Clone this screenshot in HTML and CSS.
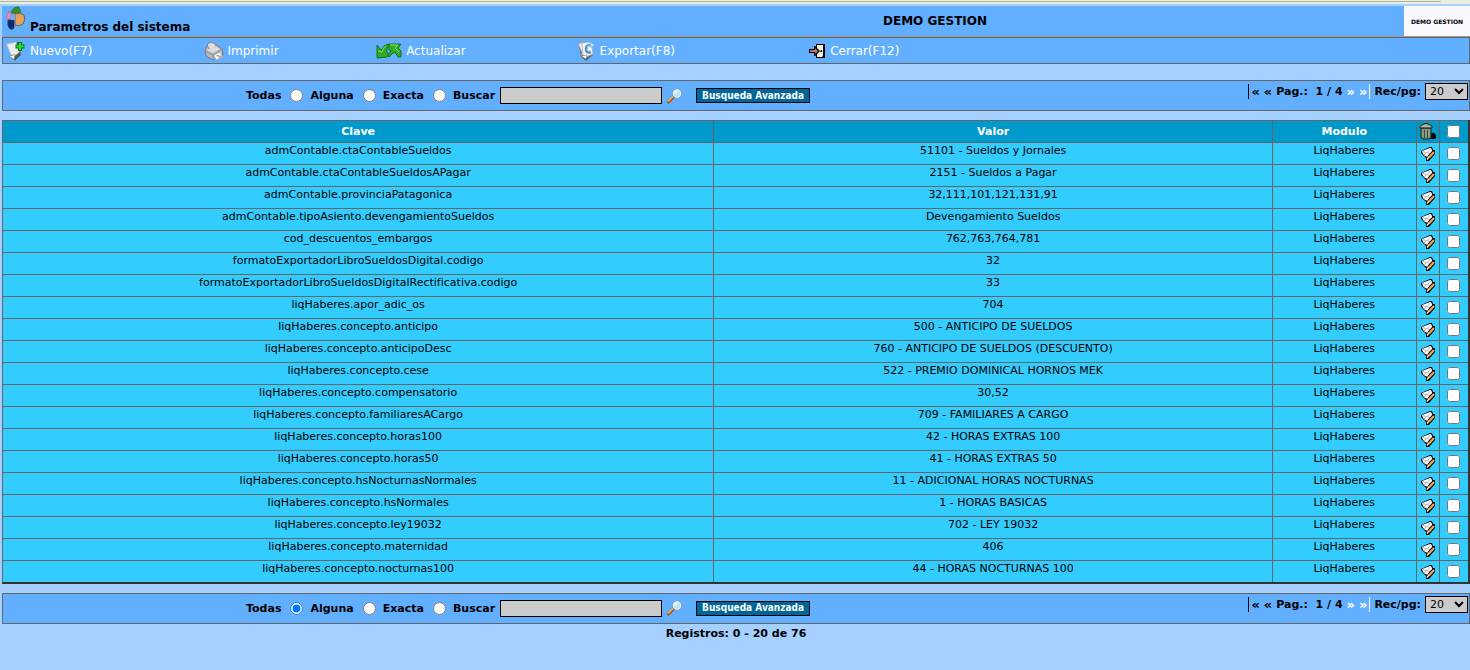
FILE: index.html
```html
<!DOCTYPE html>
<html lang="es">

<head>
    <meta charset="UTF-8">
    <meta name="viewport" content="width=device-width, initial-scale=1.0">
    <title>Parametros del sistema</title>
    <link rel="stylesheet" href="styles.css">
</head>

<body>
    <!-- Iconos reutilizados -->
    <svg class="sprites" aria-hidden="true">
        <symbol id="ico-editar" viewBox="0 0 14 14">
            <path d="M0 4 9 0h2l1 3h2v4l-6 7H5v-3L3 9 0 6z" fill="#000"/>
            <path d="M1 4 9 1h1l2 4-5 5-3-1-2-2z" fill="#fff"/>
            <path d="M2 4.500 6 6 9.500 2M3 8 5 6M7 6l3 1" stroke="#999" stroke-width="0.700" fill="none"/>
            <path d="M13 4.500 7.500 10.500" stroke="#000" stroke-width="3.500"/>
            <path d="M13 5 8 10.500" stroke="#f3a65a" stroke-width="2.200"/>
            <path d="M8 10 6 12.500" stroke="#fff0c0" stroke-width="1.500"/>
        </symbol>
        <symbol id="ico-lupa" viewBox="0 0 16 16">
            <path d="M1.500 14 6.500 9" stroke="#a85510" stroke-width="3" stroke-linecap="round"/>
            <path d="M1.500 13 6 8.500" stroke="#ffb347" stroke-width="1.500" stroke-linecap="round"/>
            <circle cx="10" cy="5.500" r="4.700" fill="#b5e4ff" stroke="#7e98b5" stroke-width="1.200"/>
            <circle cx="10" cy="5.500" r="3.800" fill="none" stroke="#e8f4fc" stroke-width="1"/>
            <path d="M8 5.500Q8 3.500 10.500 3.500" stroke="#fff" stroke-width="1.500" fill="none"/>
        </symbol>
    </svg>

    <div class="linea-superior"></div>

    <header class="cabecera">
        <svg class="logo" viewBox="0 0 20 25" aria-hidden="true">
            <path d="M5 6Q8 0 13 1l2 5q-4 3-10 1z" fill="#36902c" stroke="#40614b" stroke-width="0.600"/>
            <path d="M3 5q3 1 2 5l-2 4Q0 15 1 10z" fill="#f287b4" stroke="#9a6f91" stroke-width="0.600"/>
            <path d="M9 8q5-2 9 1 2 5-1 9-4 3-8 1z" fill="#e0a35c" stroke="#705d57" stroke-width="1"/>
            <path d="M2 14h6v8q-2 3-5 0-2-3-1-8z" fill="#122973" stroke="#27437d" stroke-width="0.600"/>
            <path d="M6 8h3v6H5z" fill="#74adf0"/>
        </svg>
        <h1 class="titulo">Parametros del sistema</h1>
        <div class="empresa">DEMO GESTION</div>
        <div class="marca">DEMO GESTION</div>
    </header>

    <nav class="menu">
        <a href="#">
            <svg width="20" height="20" viewBox="0 0 20 20" aria-hidden="true">
                <path d="M2 3 12 1 15 14 9 19.500 5 17 8 14z" fill="#4c545c"/>
                <path d="M0.500 3 10 1 13.500 11 8 15.500 5 14z" fill="#ececec" stroke="#b5b9bd" stroke-width="0.700"/>
                <path d="M3 15.500 8 18.500 9 13.500z" fill="#fff" stroke="#777" stroke-width="0.700"/>
                <path d="M14 1v9M9.500 5.500h9" stroke="#08751c" stroke-width="4"/>
                <path d="M14 2v7M10.500 5.500h7" stroke="#25e52d" stroke-width="2"/>
            </svg>
            Nuevo(F7)
        </a>
        <a href="#">
            <svg width="20" height="20" viewBox="0 0 20 20" aria-hidden="true">
                <path d="M1 10 3 5 11 3 18 8 19 14 9 19 2 15z" fill="#b9bcbb" stroke="#666b6c" stroke-width="0.800"/>
                <path d="M4 6 3 3 8 1 12 4 11 7 6 9z" fill="#ddd" stroke="#777" stroke-width="0.800"/>
                <path d="M1 10 9 14 18 8M9 14v4" stroke="#8b8f90" fill="none"/>
                <path d="M3 9 9 12 16 8 11 5z" fill="#dcdedb"/>
                <path d="M10 14 16 11 19 16 12 19z" fill="#fff" stroke="#999" stroke-width="0.600"/>
                <path d="M12 15 14 13.500 16 16z" fill="#37a9eb"/>
                <path d="M14 17 17 14 18 16z" fill="#ef7651"/>
            </svg>
            Imprimir
        </a>
        <a href="#">
            <svg width="26" height="16" viewBox="0 0 26 16" aria-hidden="true">
                <path d="M1 2 4 6 6 7Q7 2 12 1.500h2Q10 4 11 10l2 1-2 3-10 1V6z" fill="#2fae24" stroke="#17701a"/>
                <path d="M13 1h12l-3 4 3 3v6h-3l-3-5-2 1-4 4-1-2 3-4-2-1z" fill="#2fae24" stroke="#17701a"/>
                <path d="M2 8 6 9Q7 4 10 3M14 2h8l-3 3 4 4" stroke="#8be05c" fill="none"/>
            </svg>
            Actualizar
        </a>
        <a href="#">
            <svg width="19" height="20" viewBox="0 0 19 20" aria-hidden="true">
                <path d="M2 4 13 2 16 14 9 20 4 16z" fill="#606975"/>
                <path d="M1 3 6 1 8 12 3 15 5 12z" fill="#e5e5e5" stroke="#888" stroke-width="0.600"/>
                <path d="M5 2 14 1 16 13 9 16 6 14z" fill="#f8f8f8" stroke="#aaa" stroke-width="0.600"/>
                <path d="M4 15 9 18 10 14z" fill="#fff" stroke="#777" stroke-width="0.600"/>
                <path d="M14 11Q9 13 9 8 9 4 14 4" stroke="#4f8fc8" stroke-width="2.500" fill="none"/>
                <path d="M13 10Q10 11 10 8 10 4 14 4" stroke="#8bcbfb" fill="none"/>
                <path d="M13 1 18 4 14 7z" fill="#bce1ff" stroke="#68a4d7" stroke-width="0.600"/>
            </svg>
            Exportar(F8)
        </a>
        <a href="#">
            <svg width="17" height="16" viewBox="0 0 17 16" aria-hidden="true">
                <path d="M7 1h9v14H7z" fill="#000"/>
                <path d="M8 2h6v11l-1 1H8z" fill="#f1efdf"/>
                <path d="M0 6h5V3h1l5 5-5 5H5v-3H0z" fill="#000"/>
                <path d="M1 7h5V5l3 3-3 3V9H1z" fill="#c77070"/>
                <path d="M12 7h1v2h-2z" fill="#000"/>
            </svg>
            Cerrar(F12)
        </a>
    </nav>

    <form class="barra">
        <div class="busqueda">
            <label>Todas <input type="radio" name="modo"></label>
            <label>Alguna <input type="radio" name="modo"></label>
            <label>Exacta <input type="radio" name="modo"></label>
            <label class="buscar">Buscar <input type="text" name="buscar"></label>
            <button type="button" class="lupa" aria-label="Buscar"><svg width="16" height="16"><use href="#ico-lupa"/></svg></button>
            <button type="button" class="avanzada">Busqueda Avanzada</button>
        </div>
        <div class="paginador">
            <span class="flecha primera">«</span>
            <span class="flecha">«</span>
            <span class="pagina">Pag.:&nbsp; 1 / 4</span>
            <a href="#" class="flecha">»</a>
            <a href="#" class="flecha ultima">»</a>
            <label>Rec/pg: <select><option>20</option><option>50</option></select></label>
        </div>
    </form>

    <table class="listado">
        <colgroup>
            <col class="col-clave">
            <col class="col-valor">
            <col>
            <col class="col-editar">
            <col class="col-marcar">
        </colgroup>
        <thead>
            <tr>
                <th>Clave</th>
                <th>Valor</th>
                <th>Modulo</th>
                <th>
                    <svg width="17" height="17" viewBox="0 0 17 17" aria-hidden="true">
                        <path d="M11 10h4l2 2v3l-2 1H6z" fill="#000"/>
                        <path d="M2 5h10v10l-2 1H4l-2-1z" fill="#71866f" stroke="#1a261c"/>
                        <path d="M5.500 7v8M8.500 7v8" stroke="#3c503e"/>
                        <path d="M4 6v8M7 6v9M10 6v8" stroke="#9fb29c"/>
                        <path d="M1 3.500Q1 2 5 1.500V0.500h4v1q4 0.500 4 2V5H1z" fill="#8da08a" stroke="#1a261c"/>
                        <path d="M3 3h8" stroke="#c5d2bd"/>
                    </svg>
                </th>
                <th><input type="checkbox" aria-label="Marcar todos"></th>
            </tr>
        </thead>
        <tbody>
            <tr><td>admContable.ctaContableSueldos</td><td>51101 - Sueldos y Jornales</td><td>LiqHaberes</td><td><a href="#" aria-label="Editar"><svg width="14" height="14"><use href="#ico-editar"/></svg></a></td><td><input type="checkbox" aria-label="Marcar"></td></tr>
            <tr><td>admContable.ctaContableSueldosAPagar</td><td>2151 - Sueldos a Pagar</td><td>LiqHaberes</td><td><a href="#" aria-label="Editar"><svg width="14" height="14"><use href="#ico-editar"/></svg></a></td><td><input type="checkbox" aria-label="Marcar"></td></tr>
            <tr><td>admContable.provinciaPatagonica</td><td>32,111,101,121,131,91</td><td>LiqHaberes</td><td><a href="#" aria-label="Editar"><svg width="14" height="14"><use href="#ico-editar"/></svg></a></td><td><input type="checkbox" aria-label="Marcar"></td></tr>
            <tr><td>admContable.tipoAsiento.devengamientoSueldos</td><td>Devengamiento Sueldos</td><td>LiqHaberes</td><td><a href="#" aria-label="Editar"><svg width="14" height="14"><use href="#ico-editar"/></svg></a></td><td><input type="checkbox" aria-label="Marcar"></td></tr>
            <tr><td>cod_descuentos_embargos</td><td>762,763,764,781</td><td>LiqHaberes</td><td><a href="#" aria-label="Editar"><svg width="14" height="14"><use href="#ico-editar"/></svg></a></td><td><input type="checkbox" aria-label="Marcar"></td></tr>
            <tr><td>formatoExportadorLibroSueldosDigital.codigo</td><td>32</td><td>LiqHaberes</td><td><a href="#" aria-label="Editar"><svg width="14" height="14"><use href="#ico-editar"/></svg></a></td><td><input type="checkbox" aria-label="Marcar"></td></tr>
            <tr><td>formatoExportadorLibroSueldosDigitalRectificativa.codigo</td><td>33</td><td>LiqHaberes</td><td><a href="#" aria-label="Editar"><svg width="14" height="14"><use href="#ico-editar"/></svg></a></td><td><input type="checkbox" aria-label="Marcar"></td></tr>
            <tr><td>liqHaberes.apor_adic_os</td><td>704</td><td>LiqHaberes</td><td><a href="#" aria-label="Editar"><svg width="14" height="14"><use href="#ico-editar"/></svg></a></td><td><input type="checkbox" aria-label="Marcar"></td></tr>
            <tr><td>liqHaberes.concepto.anticipo</td><td>500 - ANTICIPO DE SUELDOS</td><td>LiqHaberes</td><td><a href="#" aria-label="Editar"><svg width="14" height="14"><use href="#ico-editar"/></svg></a></td><td><input type="checkbox" aria-label="Marcar"></td></tr>
            <tr><td>liqHaberes.concepto.anticipoDesc</td><td>760 - ANTICIPO DE SUELDOS (DESCUENTO)</td><td>LiqHaberes</td><td><a href="#" aria-label="Editar"><svg width="14" height="14"><use href="#ico-editar"/></svg></a></td><td><input type="checkbox" aria-label="Marcar"></td></tr>
            <tr><td>liqHaberes.concepto.cese</td><td>522 - PREMIO DOMINICAL HORNOS MEK</td><td>LiqHaberes</td><td><a href="#" aria-label="Editar"><svg width="14" height="14"><use href="#ico-editar"/></svg></a></td><td><input type="checkbox" aria-label="Marcar"></td></tr>
            <tr><td>liqHaberes.concepto.compensatorio</td><td>30,52</td><td>LiqHaberes</td><td><a href="#" aria-label="Editar"><svg width="14" height="14"><use href="#ico-editar"/></svg></a></td><td><input type="checkbox" aria-label="Marcar"></td></tr>
            <tr><td>liqHaberes.concepto.familiaresACargo</td><td>709 - FAMILIARES A CARGO</td><td>LiqHaberes</td><td><a href="#" aria-label="Editar"><svg width="14" height="14"><use href="#ico-editar"/></svg></a></td><td><input type="checkbox" aria-label="Marcar"></td></tr>
            <tr><td>liqHaberes.concepto.horas100</td><td>42 - HORAS EXTRAS 100</td><td>LiqHaberes</td><td><a href="#" aria-label="Editar"><svg width="14" height="14"><use href="#ico-editar"/></svg></a></td><td><input type="checkbox" aria-label="Marcar"></td></tr>
            <tr><td>liqHaberes.concepto.horas50</td><td>41 - HORAS EXTRAS 50</td><td>LiqHaberes</td><td><a href="#" aria-label="Editar"><svg width="14" height="14"><use href="#ico-editar"/></svg></a></td><td><input type="checkbox" aria-label="Marcar"></td></tr>
            <tr><td>liqHaberes.concepto.hsNocturnasNormales</td><td>11 - ADICIONAL HORAS NOCTURNAS</td><td>LiqHaberes</td><td><a href="#" aria-label="Editar"><svg width="14" height="14"><use href="#ico-editar"/></svg></a></td><td><input type="checkbox" aria-label="Marcar"></td></tr>
            <tr><td>liqHaberes.concepto.hsNormales</td><td>1 - HORAS BASICAS</td><td>LiqHaberes</td><td><a href="#" aria-label="Editar"><svg width="14" height="14"><use href="#ico-editar"/></svg></a></td><td><input type="checkbox" aria-label="Marcar"></td></tr>
            <tr><td>liqHaberes.concepto.ley19032</td><td>702 - LEY 19032</td><td>LiqHaberes</td><td><a href="#" aria-label="Editar"><svg width="14" height="14"><use href="#ico-editar"/></svg></a></td><td><input type="checkbox" aria-label="Marcar"></td></tr>
            <tr><td>liqHaberes.concepto.maternidad</td><td>406</td><td>LiqHaberes</td><td><a href="#" aria-label="Editar"><svg width="14" height="14"><use href="#ico-editar"/></svg></a></td><td><input type="checkbox" aria-label="Marcar"></td></tr>
            <tr><td>liqHaberes.concepto.nocturnas100</td><td>44 - HORAS NOCTURNAS 100</td><td>LiqHaberes</td><td><a href="#" aria-label="Editar"><svg width="14" height="14"><use href="#ico-editar"/></svg></a></td><td><input type="checkbox" aria-label="Marcar"></td></tr>
        </tbody>
    </table>

    <form class="barra">
        <div class="busqueda">
            <label>Todas <input type="radio" name="modo" checked></label>
            <label>Alguna <input type="radio" name="modo"></label>
            <label>Exacta <input type="radio" name="modo"></label>
            <label class="buscar">Buscar <input type="text" name="buscar"></label>
            <button type="button" class="lupa" aria-label="Buscar"><svg width="16" height="16"><use href="#ico-lupa"/></svg></button>
            <button type="button" class="avanzada">Busqueda Avanzada</button>
        </div>
        <div class="paginador">
            <span class="flecha primera">«</span>
            <span class="flecha">«</span>
            <span class="pagina">Pag.:&nbsp; 1 / 4</span>
            <a href="#" class="flecha">»</a>
            <a href="#" class="flecha ultima">»</a>
            <label>Rec/pg: <select><option>20</option><option>50</option></select></label>
        </div>
    </form>

    <p class="registros">Registros: 0 - 20 de 76</p>
</body>

</html>
```
FILE: styles.css
```css
* {
    box-sizing: border-box;
}

body {
    margin: 0;
    padding-left: 2px;
    background-color: #a5d0ff;
    color: #000;
    font-family: Verdana, "DejaVu Sans", sans-serif;
    font-size: 11px;
}

a {
    color: #fff;
    text-decoration: none;
}

svg {
    display: block;
    flex: none;
}

.sprites {
    position: absolute;
    width: 0;
    height: 0;
}

.linea-superior {
    height: 4px;
    margin: 0 0 2px -2px;
    background: linear-gradient(#a9b59c, #a9b59c) 0 1px / 98% 1px no-repeat #e8eddf;
}

/* Cabecera */
.cabecera {
    display: grid;
    grid-template-columns: 28px 1fr 1fr 66px;
    height: 31px;
    background-color: #63afff;
    border-bottom: 1px solid #999;
}

.logo {
    width: 20px;
    height: 25px;
    margin-left: 4px;
}

.titulo {
    margin: 0;
    align-self: end;
    font-size: 12px;
    line-height: 18px;
}

.empresa {
    align-self: center;
    padding-left: 166px;
    font-size: 12px;
    font-weight: bold;
}

.marca {
    display: flex;
    align-items: center;
    justify-content: center;
    background-color: #f9f9fd;
    font-size: 6px;
    font-weight: bold;
    white-space: nowrap;
}

/* Menu de acciones */
.menu {
    display: grid;
    grid-template-columns: 13.5% 11.8% 13.7% 15.9% 1fr;
    align-items: center;
    height: 27px;
    padding-left: 3px;
    background-color: #63afff;
    border: 1px solid #666;
    font-size: 12px;
}

.menu a {
    display: flex;
    align-items: center;
    gap: 4px;
}

/* Barra de busqueda y paginado */
.barra {
    display: flex;
    height: 31px;
    margin-top: 16px;
    background-color: #63afff;
    border: 1px solid #666;
    font-weight: bold;
}

.busqueda {
    flex: 1;
    display: flex;
    align-items: center;
    padding-left: 243px;
}

.busqueda label {
    display: flex;
    align-items: center;
    gap: 9px;
    margin-right: 7px;
}

.busqueda label.buscar {
    gap: 5px;
    margin-right: 5px;
}

input[type="radio"],
input[type="checkbox"] {
    width: 13px;
    height: 13px;
    margin: 0;
}

.busqueda input[type="text"] {
    width: 162px;
    height: 17px;
    padding: 1px;
    background-color: #ccc;
    border: 1px solid #000;
}

.lupa {
    padding: 0;
    background: none;
    border: 0;
}

.avanzada {
    height: 15px;
    margin-left: 13px;
    padding: 0 5px;
    background-color: #069;
    border: 1px solid #000;
    color: #fff;
    font-family: "DejaVu Sans Condensed", Tahoma, sans-serif;
    font-size: 10px;
    font-weight: bold;
    line-height: 12px;
}

.paginador {
    display: flex;
    align-items: center;
    gap: 4px;
    height: 17px;
    margin: 2px 1px 0 0;
}

.paginador label {
    display: flex;
    align-items: center;
    gap: 4px;
}

.pagina {
    white-space: nowrap;
}

.flecha {
    font-size: 13px;
    line-height: 15px;
}

.primera {
    padding-left: 2px;
    border-left: 1px solid #000;
}

.ultima {
    padding-right: 2px;
    border-right: 1px solid #fff;
}

.paginador select {
    width: 43px;
    height: 17px;
    padding: 0;
    background-color: #ccc;
    border: 1px solid #000;
    border-radius: 0;
    font-family: inherit;
    font-size: 11px;
}

/* Listado */
.listado {
    width: 100%;
    margin-top: 9px;
    border-collapse: collapse;
    table-layout: fixed;
    border: 1px solid #333;
    border-width: 1px 2px 2px 1px;
    background-color: #3cf;
    text-align: center;
}

.listado + .barra {
    margin-top: 9px;
}

.col-clave {
    width: 48.5%;
}

.col-valor {
    width: 38.1%;
}

.col-editar {
    width: 23px;
}

.col-marcar {
    width: 30px;
}

.listado th,
.listado td {
    height: 22px;
    padding: 0;
    border: 1px solid #666;
}

.listado th {
    background-color: #09c;
    color: #fff;
}

.listado td {
    line-height: 15px;
    vertical-align: top;
}

.listado svg,
.listado input {
    display: block;
    margin: 0 auto;
}

.listado td svg,
.listado td input {
    margin-top: 4px;
}

.registros {
    margin: 3px 0 0;
    line-height: 13px;
    text-align: center;
    font-weight: bold;
}
```
